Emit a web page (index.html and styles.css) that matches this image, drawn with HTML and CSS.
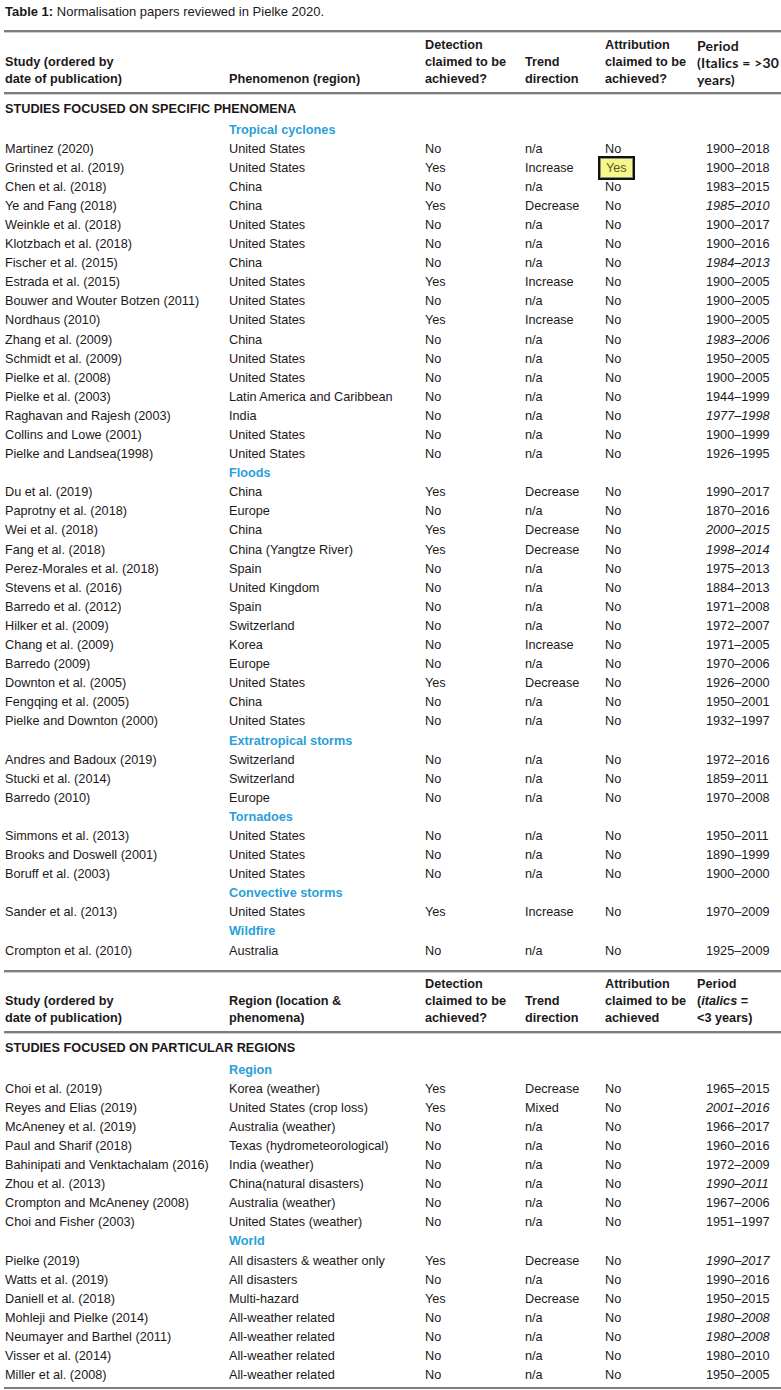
FILE: index.html
```html
<!DOCTYPE html>
<html>
<head>
<meta charset="utf-8">
<link rel="stylesheet" href="styles.css">
</head>
<body>
<div class="page">
  <p class="title"><b>Table 1:</b> Normalisation papers reviewed in Pielke 2020.</p>
  <div class="rule"></div>
  <div class="row head head1">
    <span class="hb">Study (ordered by<br>date of publication)</span>
    <span class="hb">Phenomenon (region)</span>
    <span class="hb">Detection<br>claimed to be<br>achieved?</span>
    <span class="hb">Trend<br>direction</span>
    <span class="hb">Attribution<br>claimed to be<br>achieved?</span>
    <span class="hb period-alt">Period<br>(Italics = &gt;30<br>years)</span>
  </div>
  <div class="rule"></div>
  <div class="section sec1">STUDIES FOCUSED ON SPECIFIC PHENOMENA</div>

  <div class="row"><span></span><span class="cat">Tropical cyclones</span></div>
  <div class="row"><span>Martinez (2020)</span><span>United States</span><span>No</span><span>n/a</span><span>No</span><span class="p">1900–2018</span></div>
  <div class="row"><span>Grinsted et al. (2019)</span><span>United States</span><span>Yes</span><span>Increase</span><span><span class="hl">Yes</span></span><span class="p">1900–2018</span></div>
  <div class="row"><span>Chen et al. (2018)</span><span>China</span><span>No</span><span>n/a</span><span>No</span><span class="p">1983–2015</span></div>
  <div class="row"><span>Ye and Fang (2018)</span><span>China</span><span>Yes</span><span>Decrease</span><span>No</span><span class="p i">1985–2010</span></div>
  <div class="row"><span>Weinkle et al. (2018)</span><span>United States</span><span>No</span><span>n/a</span><span>No</span><span class="p">1900–2017</span></div>
  <div class="row"><span>Klotzbach et al. (2018)</span><span>United States</span><span>No</span><span>n/a</span><span>No</span><span class="p">1900–2016</span></div>
  <div class="row"><span>Fischer et al. (2015)</span><span>China</span><span>No</span><span>n/a</span><span>No</span><span class="p i">1984–2013</span></div>
  <div class="row"><span>Estrada et al. (2015)</span><span>United States</span><span>Yes</span><span>Increase</span><span>No</span><span class="p">1900–2005</span></div>
  <div class="row"><span>Bouwer and Wouter Botzen (2011)</span><span>United States</span><span>No</span><span>n/a</span><span>No</span><span class="p">1900–2005</span></div>
  <div class="row"><span>Nordhaus (2010)</span><span>United States</span><span>Yes</span><span>Increase</span><span>No</span><span class="p">1900–2005</span></div>
  <div class="row"><span>Zhang et al. (2009)</span><span>China</span><span>No</span><span>n/a</span><span>No</span><span class="p i">1983–2006</span></div>
  <div class="row"><span>Schmidt et al. (2009)</span><span>United States</span><span>No</span><span>n/a</span><span>No</span><span class="p">1950–2005</span></div>
  <div class="row"><span>Pielke et al. (2008)</span><span>United States</span><span>No</span><span>n/a</span><span>No</span><span class="p">1900–2005</span></div>
  <div class="row"><span>Pielke et al. (2003)</span><span>Latin America and Caribbean</span><span>No</span><span>n/a</span><span>No</span><span class="p">1944–1999</span></div>
  <div class="row"><span>Raghavan and Rajesh (2003)</span><span>India</span><span>No</span><span>n/a</span><span>No</span><span class="p i">1977–1998</span></div>
  <div class="row"><span>Collins and Lowe (2001)</span><span>United States</span><span>No</span><span>n/a</span><span>No</span><span class="p">1900–1999</span></div>
  <div class="row"><span>Pielke and Landsea(1998)</span><span>United States</span><span>No</span><span>n/a</span><span>No</span><span class="p">1926–1995</span></div>

  <div class="row"><span></span><span class="cat">Floods</span></div>
  <div class="row"><span>Du et al. (2019)</span><span>China</span><span>Yes</span><span>Decrease</span><span>No</span><span class="p">1990–2017</span></div>
  <div class="row"><span>Paprotny et al. (2018)</span><span>Europe</span><span>No</span><span>n/a</span><span>No</span><span class="p">1870–2016</span></div>
  <div class="row"><span>Wei et al. (2018)</span><span>China</span><span>Yes</span><span>Decrease</span><span>No</span><span class="p i">2000–2015</span></div>
  <div class="row"><span>Fang et al. (2018)</span><span>China (Yangtze River)</span><span>Yes</span><span>Decrease</span><span>No</span><span class="p i">1998–2014</span></div>
  <div class="row"><span>Perez-Morales et al. (2018)</span><span>Spain</span><span>No</span><span>n/a</span><span>No</span><span class="p">1975–2013</span></div>
  <div class="row"><span>Stevens et al. (2016)</span><span>United Kingdom</span><span>No</span><span>n/a</span><span>No</span><span class="p">1884–2013</span></div>
  <div class="row"><span>Barredo et al. (2012)</span><span>Spain</span><span>No</span><span>n/a</span><span>No</span><span class="p">1971–2008</span></div>
  <div class="row"><span>Hilker et al. (2009)</span><span>Switzerland</span><span>No</span><span>n/a</span><span>No</span><span class="p">1972–2007</span></div>
  <div class="row"><span>Chang et al. (2009)</span><span>Korea</span><span>No</span><span>Increase</span><span>No</span><span class="p">1971–2005</span></div>
  <div class="row"><span>Barredo (2009)</span><span>Europe</span><span>No</span><span>n/a</span><span>No</span><span class="p">1970–2006</span></div>
  <div class="row"><span>Downton et al. (2005)</span><span>United States</span><span>Yes</span><span>Decrease</span><span>No</span><span class="p">1926–2000</span></div>
  <div class="row"><span>Fengqing et al. (2005)</span><span>China</span><span>No</span><span>n/a</span><span>No</span><span class="p">1950–2001</span></div>
  <div class="row"><span>Pielke and Downton (2000)</span><span>United States</span><span>No</span><span>n/a</span><span>No</span><span class="p">1932–1997</span></div>

  <div class="row"><span></span><span class="cat">Extratropical storms</span></div>
  <div class="row"><span>Andres and Badoux (2019)</span><span>Switzerland</span><span>No</span><span>n/a</span><span>No</span><span class="p">1972–2016</span></div>
  <div class="row"><span>Stucki et al. (2014)</span><span>Switzerland</span><span>No</span><span>n/a</span><span>No</span><span class="p">1859–2011</span></div>
  <div class="row"><span>Barredo (2010)</span><span>Europe</span><span>No</span><span>n/a</span><span>No</span><span class="p">1970–2008</span></div>

  <div class="row"><span></span><span class="cat">Tornadoes</span></div>
  <div class="row"><span>Simmons et al. (2013)</span><span>United States</span><span>No</span><span>n/a</span><span>No</span><span class="p">1950–2011</span></div>
  <div class="row"><span>Brooks and Doswell (2001)</span><span>United States</span><span>No</span><span>n/a</span><span>No</span><span class="p">1890–1999</span></div>
  <div class="row"><span>Boruff et al. (2003)</span><span>United States</span><span>No</span><span>n/a</span><span>No</span><span class="p">1900–2000</span></div>

  <div class="row"><span></span><span class="cat">Convective storms</span></div>
  <div class="row"><span>Sander et al. (2013)</span><span>United States</span><span>Yes</span><span>Increase</span><span>No</span><span class="p">1970–2009</span></div>

  <div class="row"><span></span><span class="cat">Wildfire</span></div>
  <div class="row"><span>Crompton et al. (2010)</span><span>Australia</span><span>No</span><span>n/a</span><span>No</span><span class="p">1925–2009</span></div>

  <div class="rule rule-gap"></div>
  <div class="row head head2">
    <span class="hb">Study (ordered by<br>date of publication)</span>
    <span class="hb">Region (location &amp;<br>phenomena)</span>
    <span class="hb">Detection<br>claimed to be<br>achieved?</span>
    <span class="hb">Trend<br>direction</span>
    <span class="hb">Attribution<br>claimed to be<br>achieved</span>
    <span class="hb">Period<br>(<i>italics</i> =<br>&lt;3 years)</span>
  </div>
  <div class="rule"></div>
  <div class="section sec2">STUDIES FOCUSED ON PARTICULAR REGIONS</div>

  <div class="row"><span></span><span class="cat">Region</span></div>
  <div class="row"><span>Choi et al. (2019)</span><span>Korea (weather)</span><span>Yes</span><span>Decrease</span><span>No</span><span class="p">1965–2015</span></div>
  <div class="row"><span>Reyes and Elias (2019)</span><span>United States (crop loss)</span><span>Yes</span><span>Mixed</span><span>No</span><span class="p i">2001–2016</span></div>
  <div class="row"><span>McAneney et al. (2019)</span><span>Australia (weather)</span><span>No</span><span>n/a</span><span>No</span><span class="p">1966–2017</span></div>
  <div class="row"><span>Paul and Sharif (2018)</span><span>Texas (hydrometeorological)</span><span>No</span><span>n/a</span><span>No</span><span class="p">1960–2016</span></div>
  <div class="row"><span>Bahinipati and Venktachalam (2016)</span><span>India (weather)</span><span>No</span><span>n/a</span><span>No</span><span class="p">1972–2009</span></div>
  <div class="row"><span>Zhou et al. (2013)</span><span>China(natural disasters)</span><span>No</span><span>n/a</span><span>No</span><span class="p i">1990–2011</span></div>
  <div class="row"><span>Crompton and McAneney (2008)</span><span>Australia (weather)</span><span>No</span><span>n/a</span><span>No</span><span class="p">1967–2006</span></div>
  <div class="row"><span>Choi and Fisher (2003)</span><span>United States (weather)</span><span>No</span><span>n/a</span><span>No</span><span class="p">1951–1997</span></div>

  <div class="row"><span></span><span class="cat">World</span></div>
  <div class="row"><span>Pielke (2019)</span><span>All disasters &amp; weather only</span><span>Yes</span><span>Decrease</span><span>No</span><span class="p i">1990–2017</span></div>
  <div class="row"><span>Watts et al. (2019)</span><span>All disasters</span><span>No</span><span>n/a</span><span>No</span><span class="p">1990–2016</span></div>
  <div class="row"><span>Daniell et al. (2018)</span><span>Multi-hazard</span><span>Yes</span><span>Decrease</span><span>No</span><span class="p">1950–2015</span></div>
  <div class="row"><span>Mohleji and Pielke (2014)</span><span>All-weather related</span><span>No</span><span>n/a</span><span>No</span><span class="p i">1980–2008</span></div>
  <div class="row"><span>Neumayer and Barthel (2011)</span><span>All-weather related</span><span>No</span><span>n/a</span><span>No</span><span class="p i">1980–2008</span></div>
  <div class="row"><span>Visser et al. (2014)</span><span>All-weather related</span><span>No</span><span>n/a</span><span>No</span><span class="p">1980–2010</span></div>
  <div class="row"><span>Miller et al. (2008)</span><span>All-weather related</span><span>No</span><span>n/a</span><span>No</span><span class="p">1950–2005</span></div>
  <div class="rule rule-end"></div>
</div>
</body>
</html>
```
FILE: styles.css
```css
html, body {
  margin: 0;
  padding: 0;
  background: #ffffff;
}
body {
  font-family: "Liberation Sans", Arial, sans-serif;
  font-size: 12.7px;
  color: #1c1819;
}
.page {
  width: 781px;
  padding-left: 5px;
  box-sizing: border-box;
  overflow: hidden;
}
.title {
  margin: 0;
  height: 30px;
  line-height: 24px;
  font-size: 13px;
}
.title b {
  font-weight: bold;
}
.rule {
  height: 2px;
  margin-left: -1px;
  background: #7d7d7d;
  box-shadow: 0 1px 0 #cfcfcf;
}
.rule-gap {
  margin-top: 9px;
}
.rule-end {
  margin-top: 2px;
}
.row {
  display: grid;
  grid-template-columns: 224px 196px 100px 80px 92px 1fr;
  grid-template-rows: 19.1px;
  height: 19.1px;
  line-height: 19.1px;
  white-space: nowrap;
}
.row > span {
  display: block;
}
.p {
  padding-left: 9px;
}
.i {
  font-style: italic;
}
.cat {
  color: #2a9fd8;
  font-weight: bold;
}
.hl {
  display: inline-block;
  border: 2px solid #111;
  box-shadow: inset 0 0 0 1px #8a8a7a;
  background: #f7f68a;
  padding: 1px 6px;
  line-height: 18px;
  margin: -3px 0 -3px -7px;
  vertical-align: middle;
  color: #5a5a20;
}
.head {
  height: auto;
  grid-template-rows: auto;
  line-height: 17px;
  align-items: end;
}
.head1 {
  padding: 3.5px 0 4.5px;
}
.head2 {
  padding: 4px 0 4.5px;
}
.hb {
  font-weight: bold;
}
.period-alt {
  font-family: Lato, "Liberation Sans", sans-serif;
  font-weight: bold;
  font-size: 14px;
  letter-spacing: 0.2px;
  padding-top: 1px;
}
.section {
  font-weight: bold;
  line-height: 19px;
}
.sec1 {
  padding: 5.5px 0 2px;
}
.sec2 {
  padding: 5.5px 0 3px;
}
```
